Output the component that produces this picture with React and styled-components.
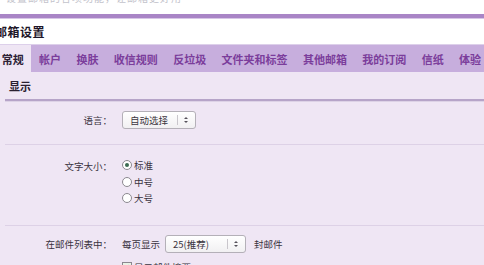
import React from 'react';
import styled, { createGlobalStyle } from 'styled-components';

const GlobalStyle = createGlobalStyle`
  html, body {
    margin: 0;
    padding: 0;
    background: #ffffff;
  }
  body {
    font-family: "Noto Sans CJK SC", "DejaVu Sans", sans-serif;
  }
`;

const tabs = ['常规', '帐户', '换肤', '收信规则', '反垃圾', '文件夹和标签', '其他邮箱', '我的订阅', '信纸', '体验'];

const Page = styled.div`
  width: 484px;
  height: 265px;
  overflow: hidden;
  background: #ffffff;
`;

const TopNote = styled.div`
  height: 14px;
  overflow: hidden;
  padding-left: 6px;
  color: #c3c3cb;
  font-size: 10px;
  line-height: 10px;
  & > span {
    display: block;
    margin-top: -7px;
    letter-spacing: 1px;
  }
`;

const Rule = styled.div`
  height: 4px;
  background: #a985c6;
  border-bottom: 1px solid #d7c6e6;
`;

const TitleBar = styled.div`
  height: 25px;
  display: flex;
  align-items: center;
  margin-left: -5px;
  font-size: 12px;
  font-weight: 700;
  color: #1e1628;
  letter-spacing: 0.5px;
`;

const TabBar = styled.div`
  height: 28px;
  display: flex;
  align-items: stretch;
  margin-left: -6px;
  background: #c7aedd;
  border-top: 1px solid #ddd0ea;
  box-sizing: border-box;
`;

const Tab = styled.div`
  display: flex;
  align-items: center;
  padding: 0 7.7px;
  white-space: nowrap;
  font-size: 11px;
  font-weight: 700;
  color: ${p => (p.$active ? '#2d2236' : '#7b3d9b')};
  background: ${p => (p.$active ? '#efe6f4' : 'transparent')};
`;

const Content = styled.div`
  background: #efe6f4;
  height: 193px;
  padding-left: 5px;
`;

const SectionHead = styled.div`
  height: 27px;
  display: flex;
  align-items: center;
  padding-left: 4px;
  font-size: 11px;
  font-weight: 700;
  color: #2a2030;
  border-bottom: 2px solid #b6a4c8;
  box-shadow: 0 1px 0 #ddd2e6;
`;

const Row = styled.div`
  display: grid;
  grid-template-columns: 107px 1fr;
  column-gap: 10px;
  align-items: start;
  height: ${p => p.$h}px;
  padding-top: ${p => p.$pt}px;
  box-sizing: border-box;
  border-bottom: ${p => (p.$last ? 'none' : '1px solid #ddd1e6')};
`;

const Label = styled.div`
  text-align: right;
  font-size: 9.5px;
  line-height: 18px;
  color: #3a3340;
  white-space: nowrap;
`;

const Field = styled.div`
  display: flex;
  align-items: center;
  gap: ${p => p.$gap || 0}px;
  font-size: 9.5px;
  color: #3a3340;
  white-space: nowrap;
`;

const Select = styled.div`
  width: ${p => p.$w}px;
  height: 18px;
  box-sizing: border-box;
  display: flex;
  align-items: center;
  border: 1px solid #b4b0b8;
  border-radius: 3px;
  background: linear-gradient(#ffffff, #f1f0f2);
  font-size: 9.5px;
  color: #3b3540;
`;

const SelectText = styled.span`
  flex: 1;
  padding-left: 7px;
`;

const SelectArrow = styled.span`
  width: 16px;
  height: 10px;
  display: flex;
  align-items: center;
  justify-content: center;
  border-left: 1px solid #c9c6cc;
  margin-right: 1px;
`;

const Options = styled.div`
  display: flex;
  flex-direction: column;
`;

const Option = styled.label`
  display: flex;
  align-items: center;
  gap: 2px;
  height: 16.5px;
  font-size: 9.5px;
  color: #3a3340;
`;

const Radio = styled.span`
  width: 8px;
  height: 8px;
  border-radius: 50%;
  border: 1px solid #8c8890;
  background: #ffffff;
  display: flex;
  align-items: center;
  justify-content: center;
  &::after {
    content: '';
    width: 4px;
    height: 4px;
    border-radius: 50%;
    background: ${p => (p.$checked ? '#3b6b52' : 'transparent')};
  }
`;

const Check = styled.span`
  width: 8px;
  height: 8px;
  border: 1px solid #8c8890;
  background: #e9f2e6;
  display: flex;
  align-items: center;
  justify-content: center;
`;

const Stack = styled.div`
  display: flex;
  flex-direction: column;
  gap: 6px;
`;

const Unit = styled.span`
  margin-left: 3px;
`;

const Arrows = () => (
  <svg width="6" height="8" viewBox="0 0 6 8">
    <path d="M1 3 L3 1 L5 3 Z M1 5 L3 7 L5 5 Z" fill="#55505a" />
  </svg>
);

const Dropdown = ({ w, children }) => (
  <Select $w={w}>
    <SelectText>{children}</SelectText>
    <SelectArrow><Arrows /></SelectArrow>
  </Select>
);

export default function App() {
  return (
    <Page>
      <GlobalStyle />
      <TopNote><span>设置邮箱的各项功能，让邮箱更好用</span></TopNote>
      <Rule />
      <TitleBar>邮箱设置</TitleBar>
      <TabBar>
        {tabs.map((t, i) => (
          <Tab key={t} $active={i === 0}>{t}</Tab>
        ))}
      </TabBar>
      <Content>
        <SectionHead>显示</SectionHead>
        <Row $h={44} $pt={10}>
          <Label>语言：</Label>
          <Field>
            <Dropdown w={74}>自动选择</Dropdown>
          </Field>
        </Row>
        <Row $h={81} $pt={12}>
          <Label>文字大小：</Label>
          <Options>
            <Option><Radio $checked />标准</Option>
            <Option><Radio />中号</Option>
            <Option><Radio />大号</Option>
          </Options>
        </Row>
        <Row $h={60} $pt={9} $last>
          <Label>在邮件列表中：</Label>
          <Stack>
            <Field $gap={5}>
              每页显示
              <Dropdown w={81}>25(推荐)</Dropdown>
              <Unit>封邮件</Unit>
            </Field>
            <Option>
              <Check>
                <svg width="6" height="6" viewBox="0 0 6 6">
                  <path d="M0.8 3 L2.4 4.6 L5.2 1.2" stroke="#2f5a3a" strokeWidth="1.2" fill="none" />
                </svg>
              </Check>
              显示邮件摘要
            </Option>
          </Stack>
        </Row>
      </Content>
    </Page>
  );
}
